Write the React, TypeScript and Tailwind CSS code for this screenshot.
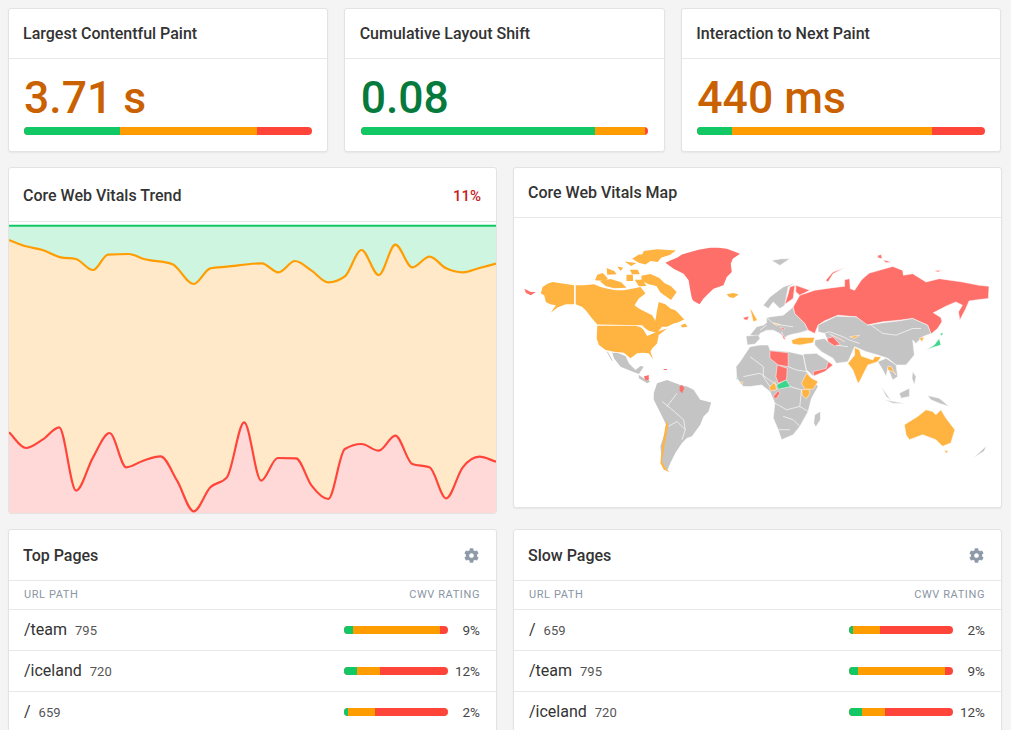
import { FaCog } from "react-icons/fa";

const FONT = "font-['Roboto','Liberation_Sans',sans-serif]";

type P = [number, number];

function monotone(pts: P[]): string {
  const n = pts.length;
  const dx: number[] = [];
  const s: number[] = [];
  for (let i = 0; i < n - 1; i++) {
    dx[i] = pts[i + 1][0] - pts[i][0];
    s[i] = (pts[i + 1][1] - pts[i][1]) / dx[i];
  }
  const t: number[] = [s[0]];
  for (let i = 1; i < n - 1; i++) {
    if (s[i - 1] * s[i] <= 0) t[i] = 0;
    else {
      const p = (s[i - 1] * dx[i] + s[i] * dx[i - 1]) / (dx[i - 1] + dx[i]);
      t[i] = (Math.sign(s[i - 1]) + Math.sign(s[i])) * Math.min(Math.abs(s[i - 1]), Math.abs(s[i]), 0.5 * Math.abs(p));
    }
  }
  t[n - 1] = s[n - 2];
  let d = `M${pts[0][0]},${pts[0][1]}`;
  for (let i = 0; i < n - 1; i++) {
    const h = dx[i] / 3;
    d += `C${pts[i][0] + h},${pts[i][1] + t[i] * h} ${pts[i + 1][0] - h},${pts[i + 1][1] - t[i + 1] * h} ${pts[i + 1][0]},${pts[i + 1][1]}`;
  }
  return d;
}

const ORANGE: P[] = [[24,63],[75,82],[125,93],[180,115],[225,120],[277,153],[322,107],[385,105],[430,120],[515,135],[580,195],[630,148],[680,143],[785,133],[835,160],[885,126],[935,155],[985,190],[1035,172],[1085,93],[1137,168],[1187,77],[1238,145],[1290,113],[1340,148],[1390,160],[1440,147],[1490,134]];
const RED: P[] = [[24,640],[75,687],[125,662],[175,625],[226,815],[277,715],[327,642],[377,745],[428,725],[480,712],[530,785],[580,877],[630,805],[680,775],[732,610],[783,785],[833,717],[888,718],[935,800],[985,840],[1035,690],[1085,675],[1137,695],[1187,650],[1238,735],[1290,745],[1340,838],[1390,745],[1440,713],[1490,728]];

function Trend() {
  const o = monotone(ORANGE);
  const r = monotone(RED);
  return (
    <svg viewBox="24 9 1466 873" className="block w-full h-[291px]" preserveAspectRatio="none">
      <rect x="24" y="20" width="1466" height="862" fill="#cdf5e0" />
      <path d={`${o}L1490,882L24,882Z`} fill="#ffe9c9" />
      <path d={`${r}L1490,882L24,882Z`} fill="#ffd9d8" />
      <line x1="24" y1="20" x2="1490" y2="20" stroke="#12c864" strokeWidth="6" />
      <path d={o} fill="none" stroke="#ff9d00" strokeWidth="6.5" />
      <path d={r} fill="none" stroke="#ff4539" strokeWidth="6.5" />
    </svg>
  );
}

const G = "#c4c4c4";
const A = "#ffb340";
const R = "#ff6f69";
const E = "#3dd68c";

const WEST: [string, string][] = [
  [R, "465,97 485,88 500,82 515,72 530,68 565,58 600,52 625,52 650,55 690,70 668,85 662,100 665,125 650,140 640,165 610,175 595,190 580,205 568,222 550,212 545,205 540,180 535,150 520,130 490,115"],
  [A, "650,192 670,188 686,193 670,203 657,200"],
  [A, "95,170 110,160 125,155 160,160 190,165 190,222 165,222 140,232 120,248 135,225 118,222 105,215 100,195 90,190"],
  [A, "195,165 220,165 250,162 270,170 290,175 315,180 340,180 365,175 390,170 405,190 385,205 372,225 385,235 395,240 425,255 435,272 440,240 445,215 465,222 480,235 495,240 505,250 522,268 500,278 490,280 470,290 455,290 440,308 415,302 405,295 395,285 260,283 240,260 225,240 215,230 195,222"],
  [A, "260,287 375,287 392,292 400,300 410,318 440,305 470,295 445,315 440,340 425,355 420,365 428,388 415,370 395,368 380,370 360,385 340,368 310,365 285,360 265,345 258,325"],
  [A, "365,85 385,72 395,72 400,62 440,56 497,60 478,74 452,82 442,95 420,92 405,102 385,97"],
  [A, "253,150 260,133 277,128 292,145 282,152"],
  [A, "288,113 312,123 318,132 290,133"],
  [A, "268,153 300,146 332,156 348,172 310,174 285,167"],
  [A, "348,133 367,133 368,152 348,152"],
  [A, "373,148 396,148 408,167 385,168"],
  [A, "393,136 420,131 447,143 462,158 482,168 499,185 482,209 465,197 450,187 438,167 415,162 393,152"],
  [A, "342,93 378,98 362,107"],
  [A, "320,108 338,112 330,122"],
  [A, "358,118 382,118 388,132 365,132"],
  [A, "512,285 525,280 532,290 515,292"],
  [R, "40,175 60,185 75,185 60,195 45,188"],
  [G, "305,368 320,368 345,378 355,400 375,420 390,408 400,410 385,432 365,425 330,410 310,385"],
  [G, "385,435 400,445 420,455 410,460 385,445"],
  [R, "400,440 415,435 415,452 405,450"],
  [R, "460,417 470,417 470,420 460,420"],
  [G, "440,460 470,450 490,458 510,465 530,470 550,480 570,510 603,518 595,545 580,560 570,585 545,620 530,625 515,640 495,670 480,700 470,725 455,700 450,650 470,590 450,550 430,510 430,490"],
  [A, "470,570 473,590 462,650 455,695 465,715 478,728 460,720 450,700 455,650 465,590"],
  [R, "508,470 515,465 522,475 515,490 508,482"],
];

const EAST: [string, string][] = [
  [G, "-42,410 -30,395 -10,365 0,350 30,345 55,345 60,360 115,365 160,375 170,425 205,470 185,505 175,545 150,590 130,615 95,630 85,600 70,565 75,520 60,485 35,465 0,470 -20,470 -40,445"],
  [R, "60,362 115,368 115,410 85,405 60,385"],
  [R, "82,405 112,415 110,450 85,460 78,440"],
  [E, "80,465 108,450 122,470 85,478"],
  [A, "58,472 75,455 80,480 62,483"],
  [R, "70,500 85,483 90,490 78,508"],
  [A, "155,460 170,430 185,445 205,455 190,478 165,478"],
  [A, "155,480 178,478 180,490 170,507 158,497"],
  [E, "-42,444 -36,444 -36,447 -42,447"],
  [A, "-28,456 -22,456 -22,462 -28,462"],
  [G, "195,555 212,545 212,570 198,592 192,580"],
  [G, "40,225 60,200 100,170 135,158 115,170 105,225 90,235 70,215 55,235"],
  [G, "0,315 20,290 40,285 50,278 50,262 75,258 100,255 130,230 135,250 165,280 175,300 150,308 130,312 110,318 105,325 90,310 70,300 50,300 30,310 25,322"],
  [G, "-12,318 25,315 30,325 15,342 -8,345"],
  [A, "0,235 5,240 22,270 10,275"],
  [R, "-20,262 -3,258 -8,270 -18,268"],
  [G, "65,90 95,85 120,85 90,105"],
  [R, "120,170 135,165 130,205 105,222 115,190"],
  [R, "138,165 180,180 150,195 138,185"],
  [R, "130,230 150,195 195,180 250,172 285,168 285,148 300,145 302,175 315,180 335,150 345,140 360,128 430,108 460,120 462,135 490,130 530,155 570,145 640,155 690,165 720,168 718,205 690,208 660,212 650,235 632,270 628,245 640,225 620,215 590,228 552,248 575,262 578,275 565,295 545,312 535,285 490,265 450,270 400,275 350,285 320,260 265,255 225,272 205,285 195,310 175,300 165,280 135,250"],
  [R, "228,150 250,125 285,112 250,130 235,155"],
  [R, "385,75 395,72 398,85 385,82"],
  [R, "400,88 425,95 410,97"],
  [R, "555,120 580,120 565,125"],
  [G, "205,285 225,275 260,258 320,260 355,285 400,278 450,272 490,265 535,285 545,310 520,320 500,340 490,330 495,375 470,405 440,405 415,385 385,375 350,365 315,350 295,395 260,400 250,385 215,365 195,345 195,330 225,325 235,335 225,310 205,305"],
  [G, "160,372 200,370 245,400 225,425 190,438 170,420"],
  [R, "190,425 230,415 235,395 250,405 225,425 192,438"],
  [A, "125,330 150,322 195,322 190,338 150,345 128,342"],
  [R, "232,325 250,320 272,345 255,348 235,335"],
  [R, "240,312 280,330 285,335 255,320"],
  [A, "300,320 330,315 315,325"],
  [A, "295,400 315,375 315,352 330,360 335,378 370,390 375,380 395,380 385,395 355,405 330,455 325,460 310,420"],
  [G, "385,395 410,385 440,405 445,440 430,450 415,415 410,440 400,420"],
  [A, "415,408 425,410 440,435 430,425 415,420"],
  [G, "395,470 420,505 430,515 410,500"],
  [G, "405,510 470,522 430,520"],
  [G, "450,490 480,475 480,500 455,505"],
  [G, "535,497 570,505 600,530 570,520 545,510"],
  [G, "490,425 500,440 495,465 488,445"],
  [A, "465,585 505,560 530,540 550,545 560,555 575,540 590,565 617,600 605,640 580,650 560,630 520,615 480,630 470,615"],
  [A, "585,662 597,664 592,672"],
  [G, "672,685 695,665 712,648 705,665"],
  [E, "530,360 555,345 570,325 575,345 550,352"],
  [E, "572,310 582,308 578,318"],
  [A, "510,325 525,320 518,335"],
  [A, "70,278 90,283 80,287"],
  [R, "90,290 105,295 100,300"],
  [R, "95,305 108,330 100,325"],
];

const LINES: string[] = [
  "365,285 400,310 440,315 490,295 515,295",
  "205,315 240,305 280,320 300,330 330,340",
  "0,380 40,410 40,440 60,470",
  "115,410 140,420 170,425",
  "75,520 110,540 150,530 175,545",
  "100,560 130,570 150,590",
  "85,600 120,600",
  "295,395 315,375",
  "-20,440 30,430 80,465",
  "120,470 155,480 150,530",
  "50,262 70,280 95,285 130,290",
  "30,300 50,285",
  "260,345 295,350",
];
const SA_LINES: string[] = [
  "455,515 480,535 520,570 525,600 515,630",
  "475,590 500,575 525,600",
  "470,530 500,490",
];

function MapChart() {
  return (
    <svg viewBox="513 218 489 290" className="block w-full h-[290px]">
      <g transform="translate(510 230) scale(0.3333)">
        {WEST.map(([c, p], i) => (
          <polygon key={i} points={p} fill={c} />
        ))}
        <polyline points="290,365 305,392" fill="none" stroke={G} strokeWidth="3" />
        {SA_LINES.map((p, i) => (
          <polyline key={i} points={p} fill="none" stroke="#fff" strokeWidth="2" />
        ))}
      </g>
      <g transform="translate(750 230) scale(0.3333)">
        {EAST.map(([c, p], i) => (
          <polygon key={i} points={p} fill={c} stroke="#fff" strokeWidth="1.5" />
        ))}
        {LINES.map((p, i) => (
          <polyline key={i} points={p} fill="none" stroke="#fff" strokeWidth="2" />
        ))}
      </g>
    </svg>
  );
}

function Bar({ g, o, h, w }: { g: number; o: number; h: string; w: string }) {
  return (
    <div className={`flex h-2 overflow-hidden rounded-[4px] bg-[#ff4539] ${h} ${w}`}>
      <div className="bg-[#12c864]" style={{ width: `${g}%` }} />
      <div className="bg-[#ff9d00]" style={{ width: `${o}%` }} />
    </div>
  );
}

function Metric({ title, value, color, g, o }: { title: string; value: string; color: string; g: number; o: number }) {
  return (
    <div className="bg-white rounded-[3px] border border-[#e3e3e3] shadow-[0_1px_2px_rgba(0,0,0,0.06)] h-[144px]">
      <div className="h-[50px] flex items-center px-[14.5px] pt-[1px] border-b border-[#e8e8e8] text-[16px] font-medium text-[#333]">{title}</div>
      <div className="px-[15.5px] pt-3">
        <div className={`text-[44.5px] leading-[54px] font-medium ${color}`}>{value}</div>
        <Bar g={g} o={o} h="mt-[2px]" w="w-full" />
      </div>
    </div>
  );
}

function Row({ path, n, g, o, pct }: { path: string; n: string; g: number; o: number; pct: string }) {
  return (
    <div className="h-[41px] flex items-center justify-between px-[15.5px] border-b border-[#e8e8e8]">
      <div className="flex items-baseline">
        <span className="text-[16px] text-[#333]">{path}</span>
        <span className="ml-2 text-[13px] text-[#555]">{n}</span>
      </div>
      <div className="flex items-center">
        <Bar g={g} o={o} h="" w="w-[104px]" />
        <span className="w-8 text-right text-[13.5px] leading-[14px] pb-[1px] text-[#444]">{pct}</span>
      </div>
    </div>
  );
}

function Table({ title, rows }: { title: string; rows: { path: string; n: string; g: number; o: number; pct: string }[] }) {
  return (
    <div className="bg-white rounded-t-[3px] border border-[#e3e3e3] shadow-[0_1px_2px_rgba(0,0,0,0.06)] h-[220px] overflow-hidden">
      <div className="h-[51px] flex items-center justify-between px-[14.5px] pt-[1px] border-b border-[#e8e8e8]">
        <span className="text-[16px] font-medium text-[#333]">{title}</span>
        <FaCog className="text-[#8f9ba8] text-[15px] mr-[2px]" />
      </div>
      <div className="h-[29px] flex items-center justify-between px-[15.5px] border-b border-[#e8e8e8] text-[11px] tracking-[0.6px] text-[#8a96a3] uppercase">
        <span>URL Path</span>
        <span>CWV Rating</span>
      </div>
      {rows.map((r) => (
        <Row key={r.path} {...r} />
      ))}
    </div>
  );
}

const TEAM = { path: "/team", n: "795", g: 8.7, o: 83.7, pct: "9%" };
const ICE = { path: "/iceland", n: "720", g: 12.5, o: 22, pct: "12%" };
const HOME = { path: "/", n: "659", g: 3.8, o: 26, pct: "2%" };

export default function App() {
  return (
    <div className={`${FONT} h-[730px] overflow-hidden bg-[#f4f4f4] pl-[7.5px] pr-[9.5px] pt-2 flex flex-col gap-[15px]`}>
      <div className="grid grid-cols-3 gap-4">
        <Metric title="Largest Contentful Paint" value="3.71 s" color="text-[#c96100]" g={33.3} o={47.7} />
        <Metric title="Cumulative Layout Shift" value="0.08" color="text-[#067a3c]" g={81.6} o={17.2} />
        <Metric title="Interaction to Next Paint" value="440 ms" color="text-[#c96100]" g={12.2} o={69.4} />
      </div>
      <div className="grid grid-cols-2 gap-4 items-start">
        <div className="bg-white rounded-[3px] border border-[#e3e3e3] overflow-hidden h-[347px]">
          <div className="h-[54px] flex items-center justify-between px-[14.5px] pt-[3px] border-b border-[#e8e8e8]">
            <span className="text-[16px] font-medium text-[#333]">Core Web Vitals Trend</span>
            <span className="text-[15px] font-medium text-[#c5221f]">11%</span>
          </div>
          <Trend />
        </div>
        <div className="bg-white rounded-[3px] border border-[#e3e3e3] shadow-[0_1px_2px_rgba(0,0,0,0.06)] overflow-hidden h-[341px]">
          <div className="h-[50px] flex items-center px-[14.5px] pt-[1px] border-b border-[#e8e8e8] text-[16px] font-medium text-[#333]">Core Web Vitals Map</div>
          <MapChart />
        </div>
      </div>
      <div className="grid grid-cols-2 gap-4">
        <Table title="Top Pages" rows={[TEAM, ICE, HOME]} />
        <Table title="Slow Pages" rows={[HOME, TEAM, ICE]} />
      </div>
    </div>
  );
}
